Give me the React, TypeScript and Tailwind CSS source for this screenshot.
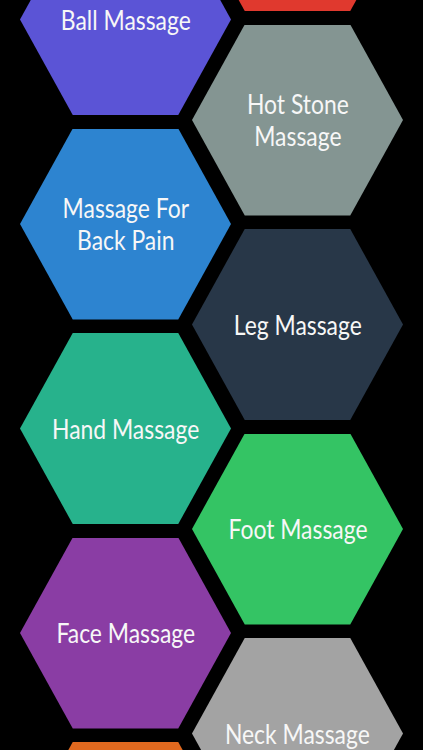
const LEFT = [
  { label: "Ball Massage", color: "bg-[#5b54d6]" },
  { label: "Massage For\nBack Pain", color: "bg-[#2d84d0]" },
  { label: "Hand Massage", color: "bg-[#27b28c]" },
  { label: "Face Massage", color: "bg-[#8a3da4]" },
  { label: "", color: "bg-[#e0691f]" },
];

const RIGHT = [
  { label: "", color: "bg-[#e0392e]" },
  { label: "Hot Stone\nMassage", color: "bg-[#849592]" },
  { label: "Leg Massage", color: "bg-[#283748]" },
  { label: "Foot Massage", color: "bg-[#34c464]" },
  { label: "Neck Massage", color: "bg-[#a3a3a3]" },
];

function Hex({ label, color }: { label: string; color: string }) {
  return (
    <div
      className={`w-[211px] h-[191px] shrink-0 flex items-center justify-center text-center [clip-path:polygon(25%_0,75%_0,100%_50%,75%_100%,25%_100%,0_50%)] ${color}`}
    >
      <span
        className="inline-block whitespace-pre-line text-[26px] leading-[32px] text-[#f7f7f7] scale-x-[0.88]"
        style={{ fontFamily: "Lato, 'Noto Sans', sans-serif" }}
      >
        {label}
      </span>
    </div>
  );
}

export default function App() {
  return (
    <div className="w-[423px] h-[750px] bg-black overflow-hidden flex items-start pl-[20px]">
      <div className="flex flex-col gap-[13.5px] mt-[-76px] shrink-0">
        {LEFT.map((h, i) => (
          <Hex key={i} {...h} />
        ))}
      </div>
      <div className="flex flex-col gap-[13.5px] mt-[-180px] ml-[-39px] shrink-0">
        {RIGHT.map((h, i) => (
          <Hex key={i} {...h} />
        ))}
      </div>
    </div>
  );
}
